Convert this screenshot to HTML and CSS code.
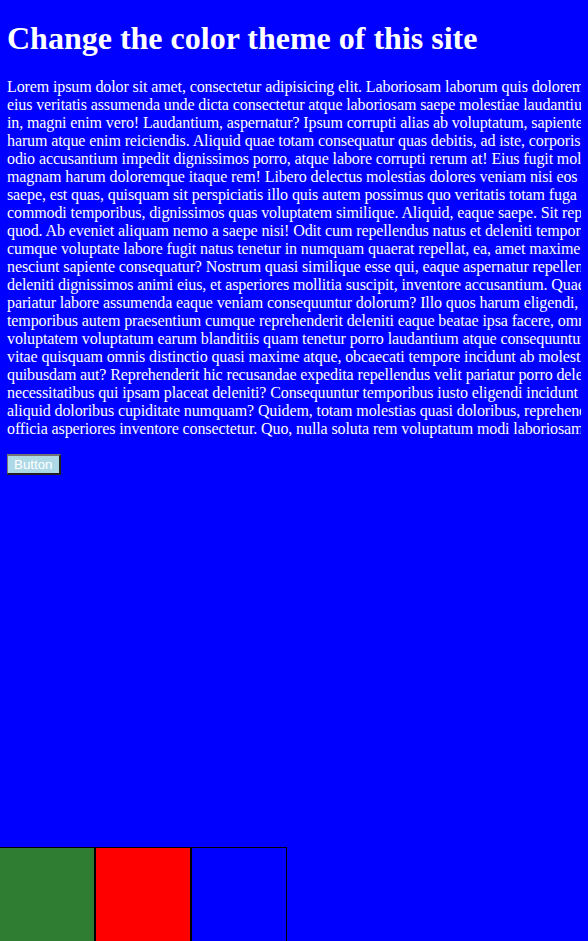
FILE: index.html
```html
<!DOCTYPE html>
<html lang="en">
<head>
<meta charset="utf-8">
<title>Change the color theme of this site</title>
<link rel="stylesheet" href="styles.css">
</head>
<body>
<h1 class="title">Change the color theme of this site</h1>
<p class="text">
<span class="line">Lorem ipsum dolor sit amet, consectetur adipisicing elit. Laboriosam laborum quis dolorem voluptas</span>
<span class="line">eius veritatis assumenda unde dicta consectetur atque laboriosam saepe molestiae laudantium</span>
<span class="line">in, magni enim vero! Laudantium, aspernatur? Ipsum corrupti alias ab voluptatum, sapiente</span>
<span class="line">harum atque enim reiciendis. Aliquid quae totam consequatur quas debitis, ad iste, corporis</span>
<span class="line">odio accusantium impedit dignissimos porro, atque labore corrupti rerum at! Eius fugit molestias</span>
<span class="line">magnam harum doloremque itaque rem! Libero delectus molestias dolores veniam nisi eos</span>
<span class="line">saepe, est quas, quisquam sit perspiciatis illo quis autem possimus quo veritatis totam fuga</span>
<span class="line">commodi temporibus, dignissimos quas voluptatem similique. Aliquid, eaque saepe. Sit repellat</span>
<span class="line">quod. Ab eveniet aliquam nemo a saepe nisi! Odit cum repellendus natus et deleniti tempora</span>
<span class="line">cumque voluptate labore fugit natus tenetur in numquam quaerat repellat, ea, amet maxime</span>
<span class="line">nesciunt sapiente consequatur? Nostrum quasi similique esse qui, eaque aspernatur repellendus</span>
<span class="line">deleniti dignissimos animi eius, et asperiores mollitia suscipit, inventore accusantium. Quae</span>
<span class="line">pariatur labore assumenda eaque veniam consequuntur dolorum? Illo quos harum eligendi,</span>
<span class="line">temporibus autem praesentium cumque reprehenderit deleniti eaque beatae ipsa facere, omnis</span>
<span class="line">voluptatem voluptatum earum blanditiis quam tenetur porro laudantium atque consequuntur</span>
<span class="line">vitae quisquam omnis distinctio quasi maxime atque, obcaecati tempore incidunt ab molestiae</span>
<span class="line">quibusdam aut? Reprehenderit hic recusandae expedita repellendus velit pariatur porro deleniti</span>
<span class="line">necessitatibus qui ipsam placeat deleniti? Consequuntur temporibus iusto eligendi incidunt</span>
<span class="line">aliquid doloribus cupiditate numquam? Quidem, totam molestias quasi doloribus, reprehenderit</span>
<span class="line">officia asperiores inventore consectetur. Quo, nulla soluta rem voluptatum modi laboriosam.</span>
</p>
<button class="theme-btn" type="button">Button</button>
<div class="swatches">
  <div class="swatch swatch-green"></div>
  <div class="swatch swatch-red"></div>
  <div class="swatch swatch-blue"></div>
</div>
</body>
</html>
```

FILE: styles.css
```css
html {
  overflow: hidden;
}
body {
  margin: 8px 7px;
  background: #0000ff;
  color: #ffffff;
  font-family: "Liberation Serif", "Times New Roman", serif;
  font-size: 16px;
}
.title {
  font-size: 32px;
  font-weight: bold;
  margin: 12px 0 21px;
}
.text {
  margin: 0 0 16px;
  letter-spacing: -0.11px;
}
.line {
  display: block;
  white-space: nowrap;
}
.theme-btn {
  font-family: "Liberation Sans", Arial, sans-serif;
  font-size: 13.333px;
  background: #add8e6;
  color: #ffffff;
  border: 2px outset #767676;
  padding: 1px 6px;
  margin: 0 0 0 -1px;
}
.swatches {
  position: fixed;
  left: -1px;
  bottom: -2px;
  display: flex;
}
.swatch {
  width: 94px;
  height: 94px;
  border: 1px solid #000000;
}
.swatch-green { background: #2e7d32; }
.swatch-red { background: #ff0000; }
.swatch-blue { background: #0000ff; }
```
